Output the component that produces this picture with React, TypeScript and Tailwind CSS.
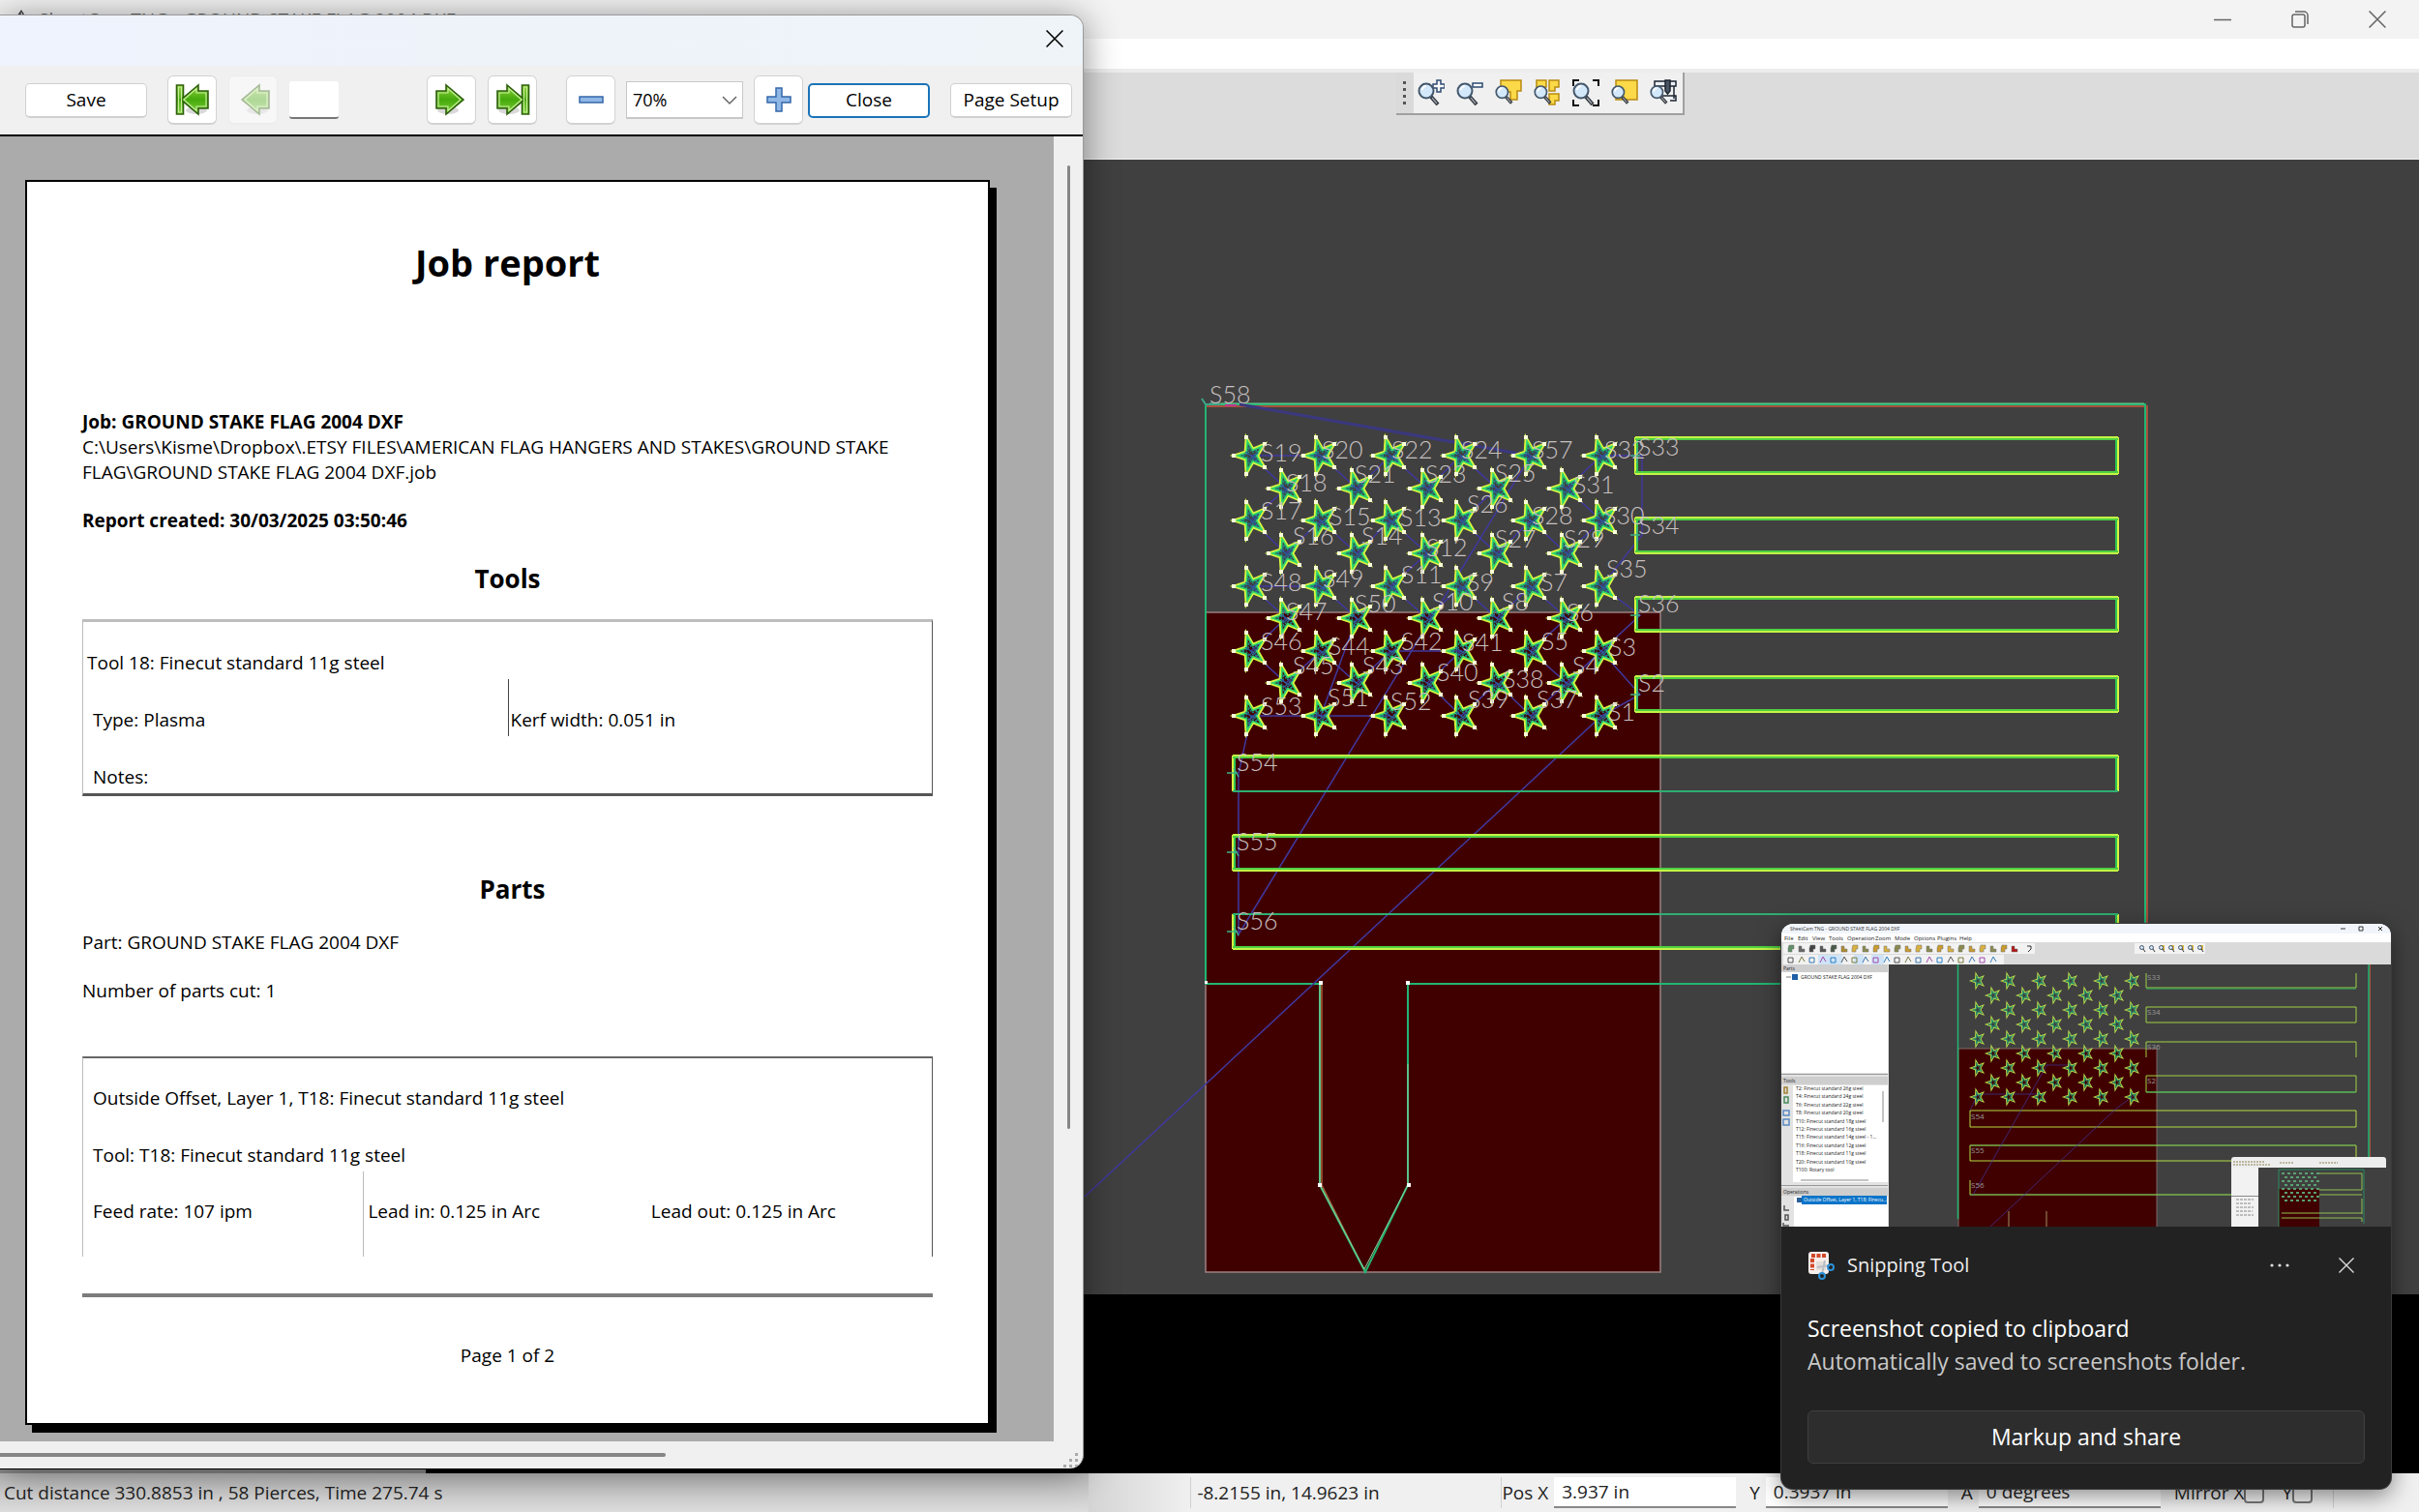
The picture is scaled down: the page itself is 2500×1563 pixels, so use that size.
import { useId } from 'react'
import type { ReactNode } from 'react'

type Point = [number, number]

const STAR_POINTS =
  '-18,0 -6,-4 -5,-19 2,-7 14,-12 7,0 14,12 2,7 -5,19 -6,4'

const STAR_TIPS: Point[] = [
  [-18, 0],
  [-5, -19],
  [14, -12],
  [14, 12],
  [-5, 19],
]

// Start numbers of the stars, row by row
const STAR_ROWS = [
  [19, 20, 22, 24, 57, 32],
  [18, 21, 23, 25, 31],
  [17, 15, 13, 26, 28, 30],
  [16, 14, 12, 27, 29],
  [48, 49, 11, 9, 7, 35],
  [47, 50, 10, 8, 6],
  [46, 44, 42, 41, 5, 3],
  [45, 43, 40, 38, 4],
  [53, 51, 52, 39, 37, 1],
]

const ROW_Y = [471, 505, 538, 572, 606, 639, 673, 706, 740]
const WIDE_X = [1293, 1365, 1437, 1510, 1582, 1655]
const NARROW_X = [1329, 1402, 1475, 1547, 1619]

const stars = STAR_ROWS.flatMap((row, r) =>
  row.map((id, c) => ({
    id,
    x: r % 2 ? NARROW_X[c] : WIDE_X[c],
    y: ROW_Y[r],
  })),
)

const LABELS: [string, number, number][] = [
  ['S58', 1250, 417],
  ['S19', 1303, 477],
  ['S20', 1366, 474],
  ['S22', 1438, 474],
  ['S24', 1510, 474],
  ['S57', 1583, 474],
  ['S32', 1658, 474],
  ['S33', 1693, 471],
  ['S18', 1329, 508],
  ['S21', 1400, 499],
  ['S23', 1473, 499],
  ['S25', 1545, 498],
  ['S31', 1626, 510],
  ['S17', 1303, 537],
  ['S15', 1374, 543],
  ['S13', 1447, 544],
  ['S26', 1516, 530],
  ['S28', 1583, 542],
  ['S30', 1657, 542],
  ['S34', 1693, 552],
  ['S16', 1336, 563],
  ['S14', 1407, 563],
  ['S12', 1474, 575],
  ['S27', 1545, 566],
  ['S29', 1616, 566],
  ['S48', 1303, 611],
  ['S49', 1367, 607],
  ['S11', 1448, 603],
  ['S9', 1516, 611],
  ['S7', 1592, 611],
  ['S35', 1660, 597],
  ['S47', 1329, 641],
  ['S50', 1400, 633],
  ['S10', 1480, 631],
  ['S8', 1552, 631],
  ['S6', 1619, 642],
  ['S36', 1693, 633],
  ['S46', 1303, 672],
  ['S44', 1373, 677],
  ['S42', 1448, 672],
  ['S41', 1511, 673],
  ['S5', 1593, 672],
  ['S3', 1663, 678],
  ['S45', 1336, 697],
  ['S43', 1408, 697],
  ['S40', 1485, 704],
  ['S38', 1553, 711],
  ['S4', 1625, 697],
  ['S2', 1693, 715],
  ['S53', 1303, 739],
  ['S51', 1372, 730],
  ['S52', 1437, 734],
  ['S39', 1517, 732],
  ['S37', 1588, 732],
  ['S1', 1662, 745],
  ['S54', 1278, 797],
  ['S55', 1278, 879],
  ['S56', 1278, 961],
]

// x1, y1, x2, y2
const STRIPES = [
  [1690, 452, 2189, 490],
  [1690, 535, 2189, 572],
  [1690, 617, 2189, 653],
  [1690, 699, 2189, 736],
  [1274, 781, 2189, 818],
  [1274, 863, 2189, 900],
  [1274, 945, 2189, 981],
]

const STRIPE_STARTS: Record<number, Point> = {
  2: [1695, 718],
  33: [1697, 471],
  34: [1697, 553],
  36: [1695, 636],
  54: [1280, 800],
  55: [1280, 882],
  56: [1280, 966],
}

const rapids = Array.from({ length: 57 }, (_, i) => {
  const star = stars.find((s) => s.id === i + 1)
  return star ? [star.x, star.y] : STRIPE_STARTS[i + 1]
})

function Star({ x, y }: { x: number; y: number }) {
  return (
    <g transform={`translate(${x} ${y})`} fill="none">
      <polygon points={STAR_POINTS} stroke="#d9f53f" strokeWidth="2.6" />
      <polygon
        points={STAR_POINTS}
        stroke="#2bd66f"
        strokeWidth="2.2"
        transform="scale(.78)"
      />
      <polygon
        points={STAR_POINTS}
        stroke="#1d8a8a"
        strokeWidth="3"
        strokeDasharray="4 3"
        transform="scale(.48)"
      />
      <path d="M-6 -4L4 3M-3 5L7 -3" stroke="#2c5c98" strokeWidth="1.5" />
      {STAR_TIPS.map(([tx, ty]) => (
        <rect
          key={`${tx},${ty}`}
          x={tx - 2}
          y={ty - 2}
          width="4"
          height="4"
          fill="#fbffd8"
        />
      ))}
    </g>
  )
}

function Stripe({ box }: { box: number[] }) {
  const [x1, y1, x2, y2] = box
  const thinTop = y1 === 945
  const thinBottom = y1 === 781
  return (
    <g fill="none" strokeWidth="2">
      <path
        d={`M${x1} ${y1}V${y2}M${x2} ${y1}V${y2}`}
        stroke="#d9f53f"
        strokeWidth="2"
      />
      <path d={`M${x1 + 2} ${y1}V${y2}M${x2 - 2} ${y1}V${y2}`} stroke="#2fc455" />
      {thinTop ? (
        <path d={`M${x1} ${y1}H${x2}`} stroke="#2fae72" />
      ) : (
        <>
          <path d={`M${x1} ${y1}H${x2}`} stroke="#c4f545" />
          <path d={`M${x1} ${y1 + 2}H${x2}`} stroke="#4fd043" />
        </>
      )}
      {thinBottom ? (
        <path d={`M${x1} ${y2}H${x2}`} stroke="#2fae72" />
      ) : (
        <>
          <path d={`M${x1} ${y2}H${x2}`} stroke="#c4f545" />
          <path d={`M${x1} ${y2 - 2}H${x2}`} stroke="#4fd043" />
        </>
      )}
    </g>
  )
}

function Drawing() {
  return (
    <svg viewBox="0 165 2500 1173" className="block w-full bg-[#404040]">
      <rect
        x="1246"
        y="633"
        width="470"
        height="682"
        fill="#400000"
        stroke="#9c8080"
        strokeWidth="1.5"
      />
      {/* sheet outline with the stake */}
      <g fill="none">
        <path d="M1246 420H2219V1016" stroke="#a8503c" strokeWidth="2" />
        <path d="M1366 1017V1225L1411 1315" stroke="#b0603c" strokeWidth="1.5" />
        <path
          d="M1246 1017V418H2217V1017H1455V1225L1411 1315L1364 1225V1017Z"
          stroke="#22b573"
          strokeWidth="2"
        />
        <path d="M1364 1017V1225L1410 1312L1455 1225V1100" stroke="#8fd09a" />
        <path d="M1250 417H2216" stroke="#68d394" />
        <path d="M1242 412L1246 418H1262" stroke="#3ba58a" strokeWidth="2" />
        <path d="M1266 419H1278" stroke="#c2328f" strokeWidth="2" />
      </g>
      <g stroke="#40389f" fill="none">
        <path d="M1281 418L1582 471" strokeWidth="3" stroke="#3b387f" />
        <path
          d={`M1121 1237L${rapids.map((p) => p.join(' ')).join('L')}`}
          strokeWidth="1.5"
        />
      </g>
      {STRIPES.map((box) => (
        <Stripe key={box[1]} box={box} />
      ))}
      {stars.map((s) => (
        <Star key={s.id} x={s.x} y={s.y} />
      ))}
      <g stroke="#3fae86" strokeWidth="1.5">
        {[799, 881, 963].map((y) => (
          <path key={y} d={`M1268 ${y}H1279M1275 ${y - 5}L1280 ${y + 4}`} />
        ))}
        {[471, 553, 636, 718].map((y) => (
          <path key={y} d={`M1685 ${y}H1695M1692 ${y - 8}V${y + 8}`} />
        ))}
      </g>
      <g fill="#fff">
        <rect x="1245" y="1014" width="3" height="3" />
        <rect x="1363" y="1014" width="4" height="4" />
        <rect x="1453" y="1014" width="4" height="4" />
        <rect x="1362" y="1223" width="4" height="4" />
        <rect x="1454" y="1223" width="4" height="4" />
      </g>
      <g fill="#c9c1c1" className="font-['Lato'] text-[25px] font-light">
        {LABELS.map(([label, x, y]) => (
          <text key={label} x={x} y={y}>
            {label}
          </text>
        ))}
      </g>
    </svg>
  )
}

function Magnifier({ small }: { small?: boolean }) {
  return (
    <g transform={small ? 'translate(0 5) scale(.82)' : 'translate(0 2)'}>
      <path d="M14 16L21 24" stroke="#30343c" strokeWidth="4" />
      <path d="M15 17L20 23" stroke="#9aa0a8" strokeWidth="1.5" />
      <circle
        cx="9"
        cy="10"
        r="7.5"
        fill="#d4e8fb"
        stroke="#44586c"
        strokeWidth="2"
      />
      <path d="M5 9a4 4 0 0 1 4 -4" stroke="#fff" strokeWidth="2" />
    </g>
  )
}

const yellow = { fill: '#fbd948', stroke: '#b88a10', strokeWidth: 1.5 }

const ZOOM_TOOLS: { label: string; art: ReactNode; small?: boolean }[] = [
  {
    label: 'Zoom in',
    art: (
      <path
        d="M20 1h4v4h4v4h-4v4h-4v-4h-4v-4h4z"
        fill="#fff"
        stroke="#2c4a70"
        strokeWidth="1.5"
      />
    ),
  },
  {
    label: 'Zoom out',
    art: (
      <path d="M17 4h10v4h-10z" fill="#fff" stroke="#2c4a70" strokeWidth="1.5" />
    ),
  },
  {
    label: 'Zoom to part',
    small: true,
    art: <path d="M6 1h21v11h-4v9h-7v-8h-10z" {...yellow} />,
  },
  {
    label: 'Zoom to all parts',
    small: true,
    art: (
      <path
        d="M3 1h10v7h-4v4h-6zM16 1h10v7h-4v4h-6zM16 15h10v7h-4v4h-6z"
        {...yellow}
      />
    ),
  },
  {
    label: 'Zoom to extents',
    art: (
      <path
        d="M1 7V1h6M21 1h6v6M1 21v6h6M21 27h6v-6"
        stroke="#111"
        strokeWidth="2"
      />
    ),
  },
  {
    label: 'Zoom to material',
    small: true,
    art: <path d="M5 1h22v20h-22z" {...yellow} />,
  },
  {
    label: 'Zoom to machine',
    small: true,
    art: (
      <g stroke="#1c2430" strokeWidth="1.5">
        <path d="M5 2h22v5h-22zM6 7v6M25 7v13M10 17h17v5h-6" fill="#eef2f8" />
        <path d="M16 1h5v11l-2.500 3l-2.500 -3z" fill="#4a5564" />
      </g>
    ),
  },
]

function ZoomToolbar() {
  return (
    <div className="ml-[57.7%] flex h-[44px] w-fit items-stretch border-r-2 border-b-2 border-[#a0a0a0] bg-[#f0f0f0]">
      <div className="flex w-[18px] flex-col items-center justify-center gap-1 bg-[#dadada]">
        {[0, 1, 2, 3].map((i) => (
          <span key={i} className="size-[3px] bg-[#555]" />
        ))}
      </div>
      <div className="flex items-center gap-3 pr-1.5 pl-1">
        {ZOOM_TOOLS.map((tool) => (
          <button key={tool.label} aria-label={tool.label} className="size-7">
            <svg viewBox="0 0 28 28" fill="none" className="size-7">
              {tool.art}
              <Magnifier small={tool.small} />
            </svg>
          </button>
        ))}
      </div>
    </div>
  )
}

function CloseIcon({ size = 'size-4' }: { size?: string }) {
  return (
    <svg viewBox="0 0 16 16" fill="none" stroke="currentColor" className={size}>
      <path d="M0.500 0.500L15.500 15.500M15.500 0.500L0.500 15.500" strokeWidth="1.4" />
    </svg>
  )
}

function TitleBar() {
  return (
    <header className="flex h-10 items-center bg-[#f3f3f3] pl-3 text-[#666]">
      <svg viewBox="0 0 20 20" className="mr-2 size-5" fill="#444">
        <path d="M10 0L20 16L12 20L1 13Z" />
        <path d="M10 3L13 15" stroke="#fff" />
      </svg>
      <span className="text-[19px]">
        SheetCam TNG - GROUND STAKE FLAG 2004 DXF
      </span>
      <div className="ml-auto flex items-center gap-[62px] pr-[34px]">
        <button aria-label="Minimize">
          <svg viewBox="0 0 18 18" className="size-[18px]" stroke="#666">
            <path d="M0 9.500H18" strokeWidth="1.500" />
          </svg>
        </button>
        <button aria-label="Restore">
          <svg
            viewBox="0 0 18 18"
            className="size-[18px]"
            stroke="#666"
            strokeWidth="1.500"
            fill="none"
          >
            <rect x="1" y="4" width="13" height="13" rx="2" />
            <path d="M4 1H13a4 4 0 0 1 4 4V14" />
          </svg>
        </button>
        <button aria-label="Close window">
          <CloseIcon size="size-[18px]" />
        </button>
      </div>
    </header>
  )
}

function StatusField({ label, value }: { label: string; value: string }) {
  const id = useId()
  return (
    <div className="flex items-center gap-[6px]">
      <label htmlFor={id}>{label}</label>
      <input
        id={id}
        defaultValue={value}
        className="h-8 w-[188px] border-b-2 border-[#888] bg-white px-2 text-[19px]"
      />
    </div>
  )
}

function StatusCheck({ label }: { label: string }) {
  const id = useId()
  return (
    <div className="flex items-center">
      <label htmlFor={id}>{label}</label>
      <input
        id={id}
        type="checkbox"
        className="size-[21px] appearance-none rounded-[4px] border-2 border-[#777] bg-[#f5f5f5]"
      />
    </div>
  )
}

function StatusBar() {
  return (
    <footer className="flex h-10 items-stretch bg-[#f0f0f0] text-[19px] text-[#222]">
      <div className="flex flex-1 items-center bg-linear-to-b from-[#bdbdbd] to-[#dcdcdc] pl-1">
        Cut distance 330.8853 in , 58 Pierces, Time 275.74 s
      </div>
      <div className="w-[105px] bg-linear-to-r from-[#d4d4d4] to-[#f0f0f0]" />
      <div className="my-1 flex w-[321px] items-center border-l border-[#d0d0d0] pl-1.5">
        -8.2155 in, 14.9623 in
      </div>
      <div className="my-1 flex items-center gap-[14px] border-l border-[#d0d0d0]">
        <StatusField label="Pos X" value="3.937 in" />
        <StatusField label="Y" value="0.3937 in" />
        <StatusField label="A" value="0 degrees" />
      </div>
      <div className="my-1 mr-[88px] flex items-center gap-[18px] border-r border-[#d0d0d0] pr-[21px] pl-[14px]">
        <StatusCheck label="Mirror X" />
        <StatusCheck label="Y" />
      </div>
    </footer>
  )
}

function ArrowIcon({ back, bar }: { back?: boolean; bar?: boolean }) {
  const id = useId()
  return (
    <svg viewBox="0 0 36 36" className={`size-9 ${back ? '' : '-scale-x-100'}`}>
      <defs>
        <linearGradient id={id} x1="0" y1="0" x2="0" y2="1">
          <stop offset="0" stopColor="#8fd33a" />
          <stop offset="0.500" stopColor="#45a90c" />
          <stop offset="1" stopColor="#7ed03a" />
        </linearGradient>
      </defs>
      <ellipse cx="22" cy="29" rx="11" ry="4" fill="#000" opacity=".15" />
      <g fill={`url(#${id})`} stroke="#2f5f10" strokeWidth="1.6">
        {bar && <path d="M1.500 3h7v30h-7z" />}
        <path d="M6 18L24 3V9H34V27H24V33Z" />
      </g>
      <g fill="none" stroke="#c6ee98" strokeWidth="1.2">
        {bar && <path d="M3.500 5h3v26h-3z" />}
        <path d="M9 18L22 6.500V11H32V25H22V29.500Z" />
      </g>
    </svg>
  )
}

function IconButton(props: {
  label: string
  disabled?: boolean
  children: ReactNode
}) {
  return (
    <button
      aria-label={props.label}
      disabled={props.disabled}
      className="flex h-[51px] w-[51px] shrink-0 items-center justify-center rounded-md border border-b-2 border-[#d2d2d2] bg-white disabled:border-[#ececec] disabled:bg-[#f7f7f7] disabled:*:opacity-40"
    >
      {props.children}
    </button>
  )
}

const dialogButton =
  'h-9 w-[126px] shrink-0 rounded-[5px] border bg-white text-[19px] text-black'

function PreviewToolbar() {
  return (
    <div className="flex h-[73px] items-center border-b-2 border-black bg-[#f0f0f0] pr-[11px] pl-[26px]">
      <button className={`${dialogButton} border-b-2 border-[#d0d0d0]`}>
        Save
      </button>
      <div className="ml-[21px] flex items-center gap-3">
        <IconButton label="First page">
          <ArrowIcon back bar />
        </IconButton>
        <IconButton label="Previous page" disabled>
          <ArrowIcon back />
        </IconButton>
        <input
          aria-label="Page"
          className="h-[39px] w-[51px] rounded-[3px] border-b-2 border-[#777] bg-white px-1 text-[19px]"
        />
      </div>
      <div className="ml-auto flex items-center gap-3">
        <IconButton label="Next page">
          <ArrowIcon />
        </IconButton>
        <IconButton label="Last page">
          <ArrowIcon bar />
        </IconButton>
      </div>
      <div className="ml-[30px] flex items-center gap-[11px]">
        <IconButton label="Zoom out">
          <svg viewBox="0 0 26 26" className="size-[26px]">
            <path
              d="M1 10h24v6h-24z"
              fill="#8fb7e6"
              stroke="#3567a8"
              strokeWidth="1.5"
            />
          </svg>
        </IconButton>
        <div className="relative">
          <select
            aria-label="Zoom"
            className="h-[39px] w-[121px] appearance-none border border-b-2 border-[#c8c8c8] bg-white px-1.5 text-[18px]"
          >
            <option>70%</option>
          </select>
          <svg
            viewBox="0 0 16 10"
            className="pointer-events-none absolute top-[15px] right-[6px] w-4"
            fill="none"
            stroke="#666"
            strokeWidth="1.5"
          >
            <path d="M1 1L8 8L15 1" />
          </svg>
        </div>
        <IconButton label="Zoom in">
          <svg viewBox="0 0 26 26" className="size-[26px]">
            <path
              d="M10 1h6v9h9v6h-9v9h-6v-9h-9v-6h9z"
              fill="#8fb7e6"
              stroke="#3567a8"
              strokeWidth="1.5"
            />
          </svg>
        </IconButton>
      </div>
      <button className={`${dialogButton} ml-[5px] border-2 border-[#1a73b8]`}>
        Close
      </button>
      <button
        className={`${dialogButton} ml-[21px] border-b-2 border-[#d0d0d0]`}
      >
        Page Setup
      </button>
    </div>
  )
}

function ReportPage() {
  return (
    <article className="border-2 border-black bg-white px-[57px] pt-[59px] pb-[57px] text-[19px] leading-[26px] text-black shadow-[7px_8px_0_0_#000]">
      <h1 className="text-center text-[38px] leading-[48px] font-bold">
        Job report
      </h1>
      <p className="mt-[128px] font-bold">Job: GROUND STAKE FLAG 2004 DXF</p>
      <p className="whitespace-nowrap">
        C:\Users\Kisme\Dropbox\.ETSY FILES\AMERICAN FLAG HANGERS AND
        STAKES\GROUND STAKE
        <br />
        FLAG\GROUND STAKE FLAG 2004 DXF.job
      </p>
      <p className="mt-6 font-bold">Report created: 30/03/2025 03:50:46</p>

      <h2 className="mt-[29px] text-center text-[26px] leading-9 font-bold">
        Tools
      </h2>
      <table className="mt-6 w-full table-fixed border-separate border-spacing-0 border-x border-t-3 border-b-3 border-t-[#bdbdbd] border-r-[#555] border-b-[#555] border-l-[#bbb]">
        <tbody className="align-bottom">
          <tr className="h-[59px]">
            <td colSpan={2} className="pb-1 pl-1">
              Tool 18: Finecut standard 11g steel
            </td>
          </tr>
          <tr className="h-[59px]">
            <td className="pb-1 pl-2.5">Type: Plasma</td>
            <td className="border-l border-[#444] pb-1 pl-0.5">
              Kerf width: 0.051 in
            </td>
          </tr>
          <tr className="h-[59px]">
            <td colSpan={2} className="pb-1 pl-2.5">
              Notes:
            </td>
          </tr>
        </tbody>
      </table>

      <h2 className="mt-[78px] pl-2.5 text-center text-[26px] leading-9 font-bold">
        Parts
      </h2>
      <p className="mt-6">Part: GROUND STAKE FLAG 2004 DXF</p>
      <p className="mt-6">Number of parts cut: 1</p>
      <table className="mt-[55px] w-full table-fixed border-separate border-spacing-0 border-x border-t-2 border-t-[#666] border-r-[#555] border-l-[#bbb]">
        <colgroup>
          <col className="w-[33%]" />
          <col className="w-[33%]" />
          <col />
        </colgroup>
        <tbody>
          <tr className="h-[58px] align-bottom">
            <td colSpan={3} className="pb-1 pl-2.5">
              Outside Offset, Layer 1, T18: Finecut standard 11g steel
            </td>
          </tr>
          <tr className="h-[59px] align-bottom">
            <td colSpan={3} className="pb-1 pl-2.5">
              Tool: T18: Finecut standard 11g steel
            </td>
          </tr>
          <tr className="h-[88px] align-top">
            <td className="pt-7 pl-2.5">Feed rate: 107 ipm</td>
            <td className="border-l border-[#bbb] pt-7 pl-1">
              Lead in: 0.125 in Arc
            </td>
            <td className="pt-7 pl-2">Lead out: 0.125 in Arc</td>
          </tr>
        </tbody>
      </table>
      <hr className="mt-[38px] border-t-4 border-[#7c7c7c]" />
      <p className="mt-[47px] text-center">Page 1 of 2</p>
    </article>
  )
}

function PreviewDialog() {
  return (
    <section className="absolute top-[15px] left-0 w-[1120px] max-w-full overflow-hidden rounded-r-[14px] border-t border-r border-[#9a9a9a] bg-[#f0f0f0] shadow-[0_4px_36px_rgba(0,0,0,0.45)]">
      <div className="flex h-[52px] items-center justify-end bg-linear-to-r from-[#eff3fd] to-[#eef4f8] pr-5 pb-1">
        <button aria-label="Close preview" className="text-black">
          <CloseIcon size="size-[18px]" />
        </button>
      </div>
      <PreviewToolbar />
      <div className="flex">
        <div className="flex-1 bg-[#ababab] pt-[45px] pr-[66px] pb-[17px] pl-[26px]">
          <ReportPage />
        </div>
        <div className="w-[30px] pt-[30px]">
          <div className="mx-auto h-[75.5%] w-[3px] rounded bg-[#868686]" />
        </div>
      </div>
      <div className="flex h-[28px] items-center justify-between">
        <div className="h-1 w-[61.5%] rounded-r bg-[#868686]" />
        <svg viewBox="0 0 16 16" className="mr-1 size-4 self-end" fill="#aaa">
          <path d="M12 0h3v3h-3zM12 6h3v3h-3zM6 6h3v3h-3zM12 12h3v3h-3zM6 12h3v3h-3zM0 12h3v3h-3z" />
        </svg>
      </div>
    </section>
  )
}

const THUMB_TOOLS = [
  'T2: Finecut standard 26g steel',
  'T4: Finecut standard 24g steel',
  'T6: Finecut standard 22g steel',
  'T8: Finecut standard 20g steel',
  'T10: Finecut standard 18g steel',
  'T12: Finecut standard 16g steel',
  'T15: Finecut standard 14g steel - 1...',
  'T16: Finecut standard 12g steel',
  'T18: Finecut standard 11g steel',
  'T20: Finecut standard 10g steel',
  'T100: Rotary tool',
]

const THUMB_MENU: [string, number][] = [
  ['File', 3],
  ['Edit', 17],
  ['View', 32],
  ['Tools', 49],
  ['Operation', 68],
  ['Zoom', 97],
  ['Mode', 117],
  ['Options', 137],
  ['Plugins', 161],
  ['Help', 184],
]

const THUMB_ICONS = ['#5f8f6a', '#666', '#444', '#555', '#4a5a4a', '#b08a30']

function thumbIconColor(i: number) {
  if (i === 21) return '#b01818'
  return i > 5 ? ['#d8b040', '#8a8a50', '#c89a30'][i % 3] : THUMB_ICONS[i]
}

// Picture of the captured desktop in the notification
function Thumbnail() {
  return (
    <svg
      viewBox="0 0 630 313"
      className="block w-full bg-[#404040] font-['Open_Sans']"
      fill="none"
    >
      <path d="M0 0H630V19H0Z" fill="#fff" />
      <path d="M0 0H630V10H0Z" fill="#f1f5fb" />
      <path d="M0 19H630V42H0Z" fill="#dadada" />
      <path d="M2 20H262V31H2ZM2 32H230V42H2ZM365 20H438V31H365Z" fill="#f2f2f2" />
      <text x="9" y="7" fontSize="5" fill="#333">
        SheetCam TNG - GROUND STAKE FLAG 2004 DXF
      </text>
      <path d="M578 5h5M597 3h4v4h-4zM617 3l4 4M621 3l-4 4" stroke="#333" />
      <g fill="#222" fontSize="6">
        {THUMB_MENU.map(([label, x]) => (
          <text key={label} x={x} y="17">
            {label}
          </text>
        ))}
      </g>
      {Array.from({ length: 22 }, (_, i) => (
        <path
          key={i}
          d={i % 2 ? 'M0 7V1H3V4H6V7Z' : 'M1 0H6V4H4V7H0V3Z'}
          transform={`translate(${7 + i * 11} 22)`}
          fill={thumbIconColor(i)}
          stroke="#777"
          strokeWidth=".5"
        />
      ))}
      <path d="M254 23h4v3l-3 3" stroke="#333" />
      <path d="M38 32H63V42H38ZM75 32H85V42H75ZM93 32H106V42H93Z" fill="#cfe4f7" />
      {Array.from({ length: 20 }, (_, i) => (
        <path
          key={i}
          d={i % 2 ? 'M0 6L3 0L6 5' : 'M0 1h5v5h-5z'}
          transform={`translate(${7 + i * 11} 34)`}
          stroke={['#555', '#7a7a40', '#3a76b0', '#a04ab0', '#2f7fc0'][i % 5]}
        />
      ))}
      {Array.from({ length: 7 }, (_, i) => (
        <g key={i} transform={`translate(${370 + i * 10} 22)`}>
          {i > 1 && <path d="M2 0h4v5h-4z" fill="#e2b93a" />}
          <path d="M4 4L6 7" stroke="#333" />
          <circle cx="2.500" cy="2.500" r="2" stroke="#456" fill="#d4e8fb" />
        </g>
      ))}

      {/* side panels */}
      <path d="M0 42H111V313H0Z" fill="#e2e2e2" />
      <path d="M0 50H110V154H0ZM12 167H110V267H12ZM13 282H110V313H13Z" fill="#fff" />
      <path d="M0 42H110V50H0ZM0 158H110V166H0ZM0 273H110V281H0Z" fill="#cecece" />
      <path d="M0 155.500H110M0 270.500H110" stroke="#999" />
      <g fill="#222" fontSize="5">
        <text x="2" y="48">Parts</text>
        <text x="2" y="164">Tools</text>
        <text x="2" y="279">Operations</text>
        <text x="20" y="57">GROUND STAKE FLAG 2004 DXF</text>
        {THUMB_TOOLS.map((tool, i) => (
          <text key={tool} x="15" y={Math.round(172 + i * 8.4)}>
            {tool}
          </text>
        ))}
      </g>
      <rect x="11" y="52" width="6" height="6" fill="#1f5fa8" />
      <path d="M5 55h5" stroke="#777" />
      <path d="M105 173V205M20 265H90" stroke="#888" />
      <g strokeWidth="1.5">
        <path d="M3 169h3v6h-3z" stroke="#a08030" />
        <path d="M3 179h4v6h-4z" stroke="#4a8a5a" />
        <path d="M2 193h6v5h-6zM2 202h6v6h-6z" stroke="#5a8ac0" />
        <path d="M3 291v5h5M4 301h3v5h-3zM2 309v3h6" stroke="#555" />
      </g>
      <rect x="21" y="281" width="88" height="9" fill="#0a74c9" />
      <rect x="16" y="283" width="5" height="5" fill="#2a5f9a" />
      <text x="23" y="287" fontSize="5" fill="#fff">
        Outside Offset, Layer 1, T18: Finecu...
      </text>

      {/* drawing */}
      <rect x="183" y="129" width="205" height="190" fill="#400000" stroke="#806868" />
      <path d="M182.500 42V305" stroke="#22b573" strokeWidth="1.500" />
      <path d="M607 42V250" stroke="#22b573" strokeWidth="1.500" />
      <path d="M608.500 42V250" stroke="#a8503c" />
      <path
        d="M377 51V66H594V51M377 86H594V102H377ZM377 138V122H594V138M377 157H594V174H377Z"
        stroke="#9fcf45"
      />
      <path d="M377 67H594M377 174H594" stroke="#37b060" />
      <path
        d="M195 193H594V210H195ZM465 245H195V229H594V242M195 265V280H465"
        stroke="#b4dc45"
      />
      <path d="M195 229H594M195 280H465" stroke="#5b9f50" />
      <path d="M235 313V297M274 313V297" stroke="#a09060" />
      <path
        d="M216 313L345 192L366 176M198 280L275 145M203 176H267M275 146H298M195 193L203 176"
        stroke="#40389f"
        opacity=".7"
      />
      {STAR_ROWS.map((row, r) =>
        row.map((id, c) => (
          <g
            key={id}
            transform={`translate(${(r % 2 ? 219 : 203) + c * 32} ${59 + r * 15}) scale(.42)`}
          >
            <polygon points={STAR_POINTS} stroke="#b9d84a" strokeWidth="2.4" />
            <polygon
              points={STAR_POINTS}
              stroke="#2a9f70"
              strokeWidth="4"
              transform="scale(.6)"
            />
          </g>
        )),
      )}
      <g fill="#999" fontSize="8">
        <text x="378" y="58">S33</text>
        <text x="378" y="94">S34</text>
        <text x="378" y="130">S36</text>
        <text x="378" y="165">S2</text>
        <text x="196" y="202">S54</text>
        <text x="196" y="237">S55</text>
        <text x="196" y="273">S56</text>
      </g>

      {/* nested notification */}
      <g>
        <path d="M465 313V244a3 3 0 0 1 3 -3H622a3 3 0 0 1 3 3V313Z" fill="#404040" />
        <path d="M465 252V244a3 3 0 0 1 3 -3H622a3 3 0 0 1 3 3V252Z" fill="#ededed" />
        <path d="M465 252H493V313H465Z" fill="#f2f2f2" />
        <path d="M465 281.500H493" stroke="#888" />
        <path
          d="M467 246H500M467 249H505M515 247H530M556 247H575"
          stroke="#8a8050"
          strokeDasharray="2 1"
        />
        <path
          d="M470 285H488M470 289H486M470 293H488M470 297H487M470 301H488"
          stroke="#888"
          strokeDasharray="3 1"
        />
        <path d="M514 274H556V313H514Z" fill="#400000" />
        <path d="M514 313V254H602V310" stroke="#2a8a60" />
        <path
          d="M556 258H600V275H556M556 280H600M600 284V300M517 299H600M517 304H600V308"
          stroke="#8fc050"
        />
        {[0, 1, 2, 3, 4, 5, 6, 7].map((i) => (
          <path
            key={i}
            d={`M${i % 2 ? 520 : 517} ${258 + i * 4}H556`}
            stroke="#5aa070"
            strokeWidth="2"
            strokeDasharray="3 3"
          />
        ))}
      </g>
    </svg>
  )
}

function SnippingIcon() {
  return (
    <svg viewBox="0 0 28 30" className="h-[30px] w-7" fill="none">
      <rect x="1" y="1" width="21" height="23" rx="3" fill="#f6efec" />
      <path
        d="M4 5H19M5 8V20"
        stroke="#d2492a"
        strokeWidth="4"
        strokeDasharray="4 1.500"
      />
      <path d="M9 11h10v9h-10z" fill="#e4dedb" />
      <path d="M10 17L23 15M18 10L15 24" stroke="#b9bec4" strokeWidth="2" />
      <circle cx="24" cy="17" r="3" stroke="#2b8fd6" strokeWidth="2" />
      <circle cx="15" cy="26" r="3" stroke="#2b8fd6" strokeWidth="2" />
    </svg>
  )
}

function Toast() {
  return (
    <aside className="absolute right-[29px] bottom-[24px] w-[630px] overflow-hidden rounded-[12px] bg-[#222] text-[23px] text-white shadow-[0_6px_24px_rgba(0,0,0,0.5)] ring-1 ring-[#3a3a3a]">
      <Thumbnail />
      <div className="px-[27px] pt-[24px] pb-[26px]">
        <div className="flex h-8 items-center">
          <SnippingIcon />
          <span className="ml-[13px] text-[20px] text-[#eee]">Snipping Tool</span>
          <button aria-label="More options" className="ml-auto">
            <svg viewBox="0 0 20 4" className="w-5" fill="#ddd">
              <circle cx="2" cy="2" r="1.600" />
              <circle cx="10" cy="2" r="1.600" />
              <circle cx="18" cy="2" r="1.600" />
            </svg>
          </button>
          <button aria-label="Dismiss" className="mr-[11px] ml-[51px] text-[#ddd]">
            <CloseIcon />
          </button>
        </div>
        <p className="mt-8 leading-[34px]">Screenshot copied to clipboard</p>
        <p className="leading-[34px] text-[#c8c8c8]">
          Automatically saved to screenshots folder.
        </p>
        <button className="mt-[34px] h-[55px] w-full rounded-[6px] border border-[#404040] bg-[#2d2d2d]">
          Markup and share
        </button>
      </div>
    </aside>
  )
}

export default function App() {
  return (
    <main className="relative flex min-h-screen flex-col overflow-hidden bg-black font-['Open_Sans',sans-serif]">
      <TitleBar />
      <div className="h-[31px] bg-white" />
      <div className="h-[94px] border-t-4 border-b border-t-[#ececec] border-b-[#f4f4f4] bg-[#dcdcdc]">
        <ZoomToolbar />
      </div>
      <Drawing />
      <div className="flex flex-1 items-end">
        <div className="h-1 w-[440px] bg-[#8c8c8c]" />
      </div>
      <StatusBar />
      <PreviewDialog />
      <Toast />
    </main>
  )
}
